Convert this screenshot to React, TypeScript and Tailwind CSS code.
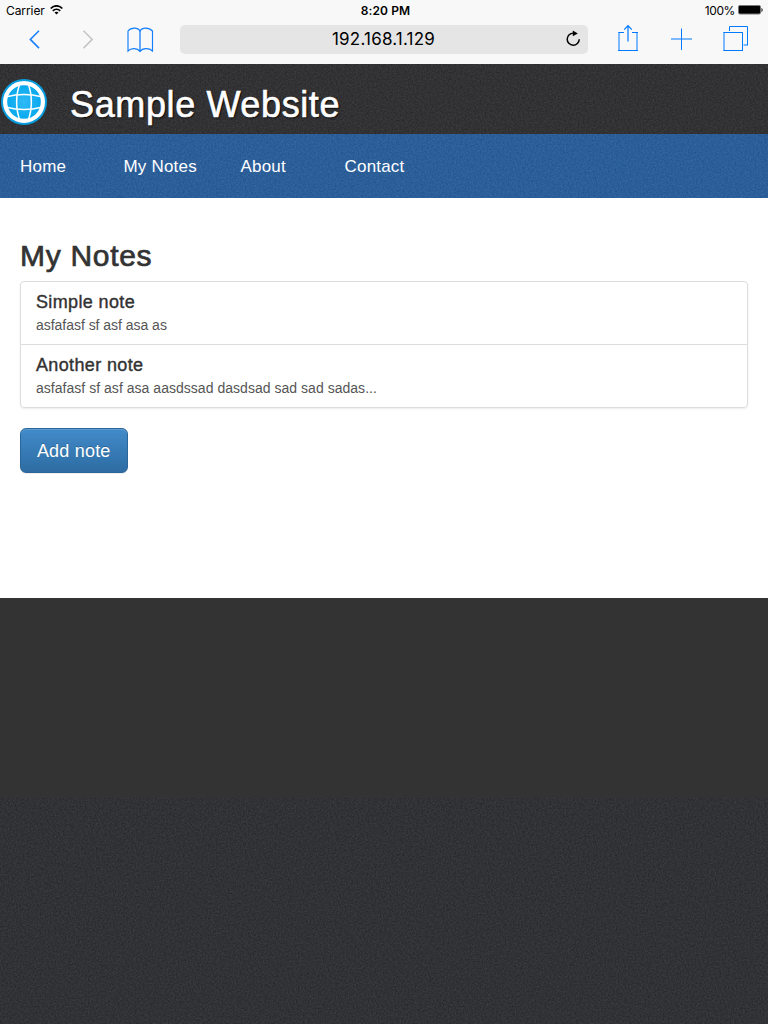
import type { ReactNode } from "react";

const HELVETICA = "font-['Liberation_Sans',Arial,sans-serif]";
const SYSTEM = "font-['Inter',sans-serif]";

const links = [
  { label: "Home", width: "w-[103.5px]" },
  { label: "My Notes", width: "w-[117px]" },
  { label: "About", width: "w-[104px]" },
  { label: "Contact", width: "w-[100px]" },
];

const notes = [
  { title: "Simple note", text: "asfafasf sf asf asa as", textSpacing: "tracking-[-0.03px]" },
  { title: "Another note", text: "asfafasf sf asf asa aasdssad dasdsad sad sad sadas...", textSpacing: "tracking-[0.03px]" },
];

function Texture({ id }: { id: string }) {
  return (
    <svg className="pointer-events-none absolute inset-0 h-full w-full" aria-hidden="true">
      <filter id={id} x="0" y="0" width="100%" height="100%" colorInterpolationFilters="sRGB">
        <feTurbulence type="fractalNoise" baseFrequency="0.6" numOctaves="3" seed="4" />
        <feColorMatrix values="1.4 0 0 0 -0.2  1.4 0 0 0 -0.2  1.4 0 0 0 -0.2  0 0 0 0 0.085" />
      </filter>
      <rect width="100%" height="100%" filter={`url(#${id})`} />
    </svg>
  );
}

function Textured({ id, className, children }: { id: string; className: string; children?: ReactNode }) {
  return (
    <div className={`relative overflow-hidden ${className}`}>
      <Texture id={id} />
      {children}
    </div>
  );
}

function StatusBar() {
  return (
    <div className="grid h-5 grid-cols-3 items-center pt-px text-[12px] leading-5 text-black">
      <div className="flex items-center gap-[5px] pl-1.5">
        <span className="tracking-[-0.08px]">Carrier</span>
        <svg width="13" height="10" viewBox="0 0 13 10" fill="none" stroke="#000" strokeWidth="1.7" className="-mt-0.5">
          <path d="M.7 3.5C4-.1 9-.1 12.3 3.5" />
          <path d="M2.8 5.8c2.1-2.1 5.3-2.1 7.4 0" />
          <path d="M6.5 9.5 4.5 7.5c1.2-1 2.8-1 4 0Z" fill="#000" stroke="none" />
        </svg>
      </div>
      <div className="pl-[3px] text-center font-semibold tracking-[0.1px]">8:20 PM</div>
      <div className="flex items-center justify-end gap-[3px] pr-[5px]">
        <span className="tracking-[-0.4px]">100%</span>
        <svg width="25" height="10" viewBox="0 0 25 10" className="-mt-0.5">
          <rect x=".5" y=".5" width="22" height="8.5" rx="1.4" fill="#000" stroke="#777" strokeWidth="1" />
          <path d="M23.5 3c1.4.4 1.4 3.6 0 4Z" fill="#000" />
        </svg>
      </div>
    </div>
  );
}

function Toolbar() {
  return (
    <div className="flex h-11 items-start">
      <div className="flex w-[180px]">
        <svg width="180" height="43" viewBox="0 20 180 43" fill="none" stroke="#147efb" strokeWidth="1.5">
          <path d="m39 30.7-8.7 8.7 8.7 8.7" />
          <path d="m83.5 30.7 8.7 8.7-8.7 8.7" stroke="#c4c4c6" />
          <path d="M140 31c-2-3.8-9-3.8-12 0v20c3-3.3 9.5-3 12 .4 2.5-3.4 9-3.7 12.5-.4V31c-3.5-3.8-10.5-3.8-12.5 0Z" strokeWidth="1.15" />
          <path d="M140 31v20.8" strokeWidth="1.3" />
        </svg>
      </div>
      <div className="mt-[5px] flex h-[28.5px] w-[408px] items-center rounded-[5px] bg-[#e5e5e6] pl-5">
        <span className="flex-1 pl-[4px] text-center text-[17px] leading-7 tracking-[0.2px] text-black">192.168.1.129</span>
        <svg width="25" height="28" viewBox="563 25 25 28" fill="none" stroke="#000" strokeWidth="1.5">
          <path d="M573.5 33.2a6 6 0 1 0 5.700 6" />
          <path d="m572.8 30.6 5 2.9-5 2.7Z" fill="#000" stroke="none" />
        </svg>
      </div>
      <svg width="180" height="43" viewBox="588 20 180 43" fill="none" stroke="#007aff" strokeWidth="1">
        <path d="M624 32.5h-5.5M619 32v19M618 50.5h20M637 51V32M638 32.5h-6" />
        <path d="M628 41.5V26M624.2 29.6l3.8-4 3.8 4" strokeWidth="1.2" />
        <path d="M671 39h21M681.5 28.5v21.5" />
        <path d="M723.5 32.5h19.500M723.5 50.5h19.500M724 32v19M742.500 32v19" />
        <path d="M729.5 31v-4.500h18V45M748 45h-4.500" />
      </svg>
    </div>
  );
}

function Globe() {
  return (
    <svg width="48" height="48" viewBox="0 0 48 48" className="relative shrink-0" fill="none">
      <defs>
        <radialGradient id="globe">
          <stop stopColor="#2fbaf6" />
          <stop offset="1" stopColor="#04a7ee" />
        </radialGradient>
      </defs>
      <circle cx="24" cy="24" r="23" fill="#079ddf" />
      <circle cx="24" cy="24" r="18.9" fill="url(#globe)" stroke="#fff" strokeWidth="4.2" />
      <g stroke="#fff" strokeWidth="1.5">
        <path d="M19.800 6c-4.200 11-4.200 25 0 36M28.200 6c4.200 11 4.200 25 0 36" />
        <path d="M6.500 18.800c11-3 24-3 35 0M6.500 29.200c11 3 24 3 35 0" />
      </g>
    </svg>
  );
}

export default function App() {
  return (
    <div className={`flex h-screen flex-col overflow-hidden bg-white ${HELVETICA}`}>
      <div className={`h-16 shrink-0 bg-[#f8f8f8] ${SYSTEM}`}>
        <StatusBar />
        <Toolbar />
      </div>

      <Textured id="grain-header" className="h-[70px] shrink-0 bg-[#2b2b2d]">
        <header className="relative flex pt-[14px]">
          <Globe />
          <h1 className="pl-[22px] pt-[6px] text-[36px] leading-[42px] tracking-[0.62px] text-white [-webkit-text-stroke:0.6px_white] [text-shadow:1px_1px_2px_#000]">
            Sample Website
          </h1>
        </header>
      </Textured>

      <Textured id="grain-nav" className="h-16 shrink-0 bg-[#245c9b]">
        <nav className="relative flex h-full items-center pt-[2px] pl-5 text-[17px] leading-6 tracking-[0.2px] text-white">
          {links.map((link) => (
            <a key={link.label} className={link.width}>{link.label}</a>
          ))}
        </nav>
      </Textured>

      <main className="h-[400px] shrink-0 bg-white px-5 pt-[41px] text-[#333]">
        <h2 className="text-[30px] leading-[33px] tracking-[0.7px] [-webkit-text-stroke:0.7px_#333]">My Notes</h2>
        <div className="mt-[9px] rounded border border-[#ddd] shadow-[0_1px_2px_rgba(0,0,0,0.075)]">
          {notes.map((note) => (
            <a key={note.title} className="block h-[63px] border-b border-[#ddd] px-[15px] pt-[10px] last:h-[62px] last:border-b-0">
              <h3 className="text-[18px] leading-5 tracking-[0.36px] [-webkit-text-stroke:0.4px_#333]">{note.title}</h3>
              <p className={`mt-[4px] text-[14px] leading-[18px] text-[#555] ${note.textSpacing}`}>{note.text}</p>
            </a>
          ))}
        </div>
        <button className="mt-5 h-[45px] w-[107.5px] rounded-md border border-[#2b669a] bg-linear-to-b from-[#428bca] to-[#2d6ca2] pt-px text-[18px] tracking-[0.2px] text-white shadow-[inset_0_1px_0_rgba(255,255,255,0.15),0_1px_1px_rgba(0,0,0,0.075)] [text-shadow:0_-1px_0_rgba(0,0,0,0.2)]">
          Add note
        </button>
      </main>

      <div className="h-[200px] shrink-0 bg-[#333]" />
      <Textured id="grain-footer" className="flex-1 bg-[#292b2f]" />
    </div>
  );
}
